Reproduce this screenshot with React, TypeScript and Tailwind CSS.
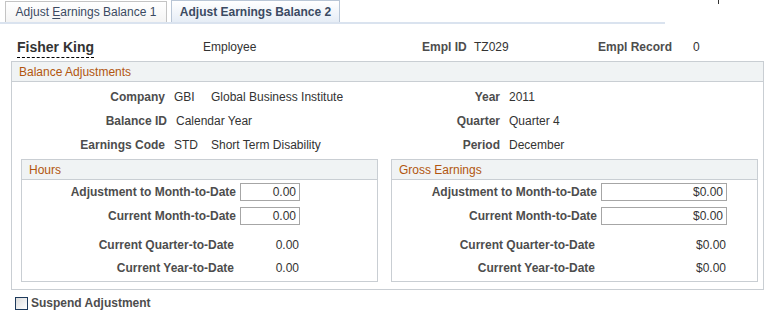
import React from "react";

const LBL = "font-bold text-[#4d4d4d]";
const VAL = "text-[#333333]";

function InputRow({ label, value, labelW, inputW }: { label: string; value: string; labelW: string; inputW: string }) {
  return (
    <div className="flex items-center h-[18px]">
      <div className={`${labelW} text-right ${LBL} whitespace-nowrap`}>{label}</div>
      <div className={`ml-[4px] ${inputW} h-[18px] border border-[#a6a6a6] bg-white text-right pr-[3px] leading-[16px] ${VAL}`}>{value}</div>
    </div>
  );
}

function TextRow({ label, value, labelW, valW }: { label: string; value: string; labelW: string; valW: string }) {
  return (
    <div className="flex items-center h-[23px]">
      <div className={`${labelW} text-right pr-[2px] ${LBL} whitespace-nowrap`}>{label}</div>
      <div className={`ml-[4px] ${valW} text-right pr-[1px] ${VAL}`}>{value}</div>
    </div>
  );
}

function SubBox({ title, width, children }: { title: string; width: string; children: React.ReactNode }) {
  return (
    <div className={`${width} border border-[#c9ced3]`}>
      <div className="h-[20px] bg-[#f0f3f4] border-b border-[#c9ced3] pl-[7px] text-[#b2560f] leading-[20px]">{title}</div>
      <div className="pt-[3px] pb-[2px] flex flex-col">{children}</div>
    </div>
  );
}

export default function App() {
  return (
    <div className="w-[770px] h-[316px] bg-white text-[12px] leading-[14px] relative overflow-hidden" style={{ fontFamily: '"Liberation Sans", Arial, sans-serif' }}>
      {/* tiny mark top right */}
      <div className="absolute left-[718px] top-0 w-[1px] h-[4px] bg-[#333]" />
      {/* Tabs */}
      <div className="w-[665px] h-[24px] border-b-2 border-[#dae3ef] flex items-end pl-[5px] gap-[4px]">
        <div className="w-[162px] h-[21px] border border-b-0 border-[#c4c4c4] bg-gradient-to-b from-white to-[#f4f4f4] text-[#3b4a62] flex items-center justify-center">
          <span>Adjust <span className="underline underline-offset-2">E</span>arnings Balance 1</span>
        </div>
        <div className="w-[169px] h-[22px] border border-b-0 border-[#b9c6d6] bg-gradient-to-b from-white to-[#e6edf6] text-[#3b4a62] font-bold flex items-center justify-center">
          Adjust Earnings Balance 2
        </div>
      </div>

      {/* Employee header */}
      <div className="flex items-center h-[18px] mt-[14px]">
        <div className="w-[203px] pl-[17px]">
          <span className="text-[14px] font-bold text-[#333] border-b border-dashed border-black pb-[2px]">Fisher King</span>
        </div>
        <div className={`w-[219px] ${VAL}`}>Employee</div>
        <div className={`${LBL} w-[52px]`}>Empl ID</div>
        <div className={`${VAL} w-[124px]`}>TZ029</div>
        <div className={`${LBL} w-[95px]`}>Empl Record</div>
        <div className={VAL}>0</div>
      </div>

      {/* Balance Adjustments */}
      <div className="ml-[11px] mt-[5px] w-[753px] border border-[#c9ced3]">
        <div className="h-[20px] bg-[#f0f3f4] border-b border-[#c9ced3] pl-[7px] text-[#b2560f] leading-[20px]">Balance Adjustments</div>
        <div className="pt-[3px] flex">
          <div className="w-[400px] flex flex-col">
            <div className="flex items-center h-[24px]">
              <div className={`w-[153px] text-right ${LBL}`}>Company</div>
              <div className={`ml-[9px] w-[37px] ${VAL}`}>GBI</div>
              <div className={VAL}>Global Business Institute</div>
            </div>
            <div className="flex items-center h-[24px]">
              <div className={`w-[155px] text-right ${LBL}`}>Balance ID</div>
              <div className={`ml-[9px] ${VAL}`}>Calendar Year</div>
            </div>
            <div className="flex items-center h-[24px]">
              <div className={`w-[153px] text-right ${LBL}`}>Earnings Code</div>
              <div className={`ml-[9px] w-[37px] ${VAL}`}>STD</div>
              <div className={VAL}>Short Term Disability</div>
            </div>
          </div>
          <div className="flex flex-col">
            <div className="flex items-center h-[24px]">
              <div className={`w-[88px] text-right ${LBL}`}>Year</div>
              <div className={`ml-[9px] ${VAL}`}>2011</div>
            </div>
            <div className="flex items-center h-[24px]">
              <div className={`w-[88px] text-right ${LBL}`}>Quarter</div>
              <div className={`ml-[9px] ${VAL}`}>Quarter 4</div>
            </div>
            <div className="flex items-center h-[24px]">
              <div className={`w-[88px] text-right ${LBL}`}>Period</div>
              <div className={`ml-[9px] ${VAL}`}>December</div>
            </div>
          </div>
        </div>

        <div className="flex mt-[2px] ml-[9px] gap-[13px] pb-[7px]">
          <SubBox title="Hours" width="w-[357px]">
            <div className="flex flex-col gap-[6px]">
              <InputRow label="Adjustment to Month-to-Date" value="0.00" labelW="w-[214px]" inputW="w-[60px]" />
              <InputRow label="Current Month-to-Date" value="0.00" labelW="w-[214px]" inputW="w-[60px]" />
            </div>
            <div className="mt-[8px] flex flex-col">
              <TextRow label="Current Quarter-to-Date" value="0.00" labelW="w-[214px]" valW="w-[60px]" />
              <TextRow label="Current Year-to-Date" value="0.00" labelW="w-[214px]" valW="w-[60px]" />
            </div>
          </SubBox>
          <SubBox title="Gross Earnings" width="w-[367px]">
            <div className="flex flex-col gap-[6px]">
              <InputRow label="Adjustment to Month-to-Date" value="$0.00" labelW="w-[205px]" inputW="w-[126px]" />
              <InputRow label="Current Month-to-Date" value="$0.00" labelW="w-[205px]" inputW="w-[126px]" />
            </div>
            <div className="mt-[8px] flex flex-col">
              <TextRow label="Current Quarter-to-Date" value="$0.00" labelW="w-[205px]" valW="w-[126px]" />
              <TextRow label="Current Year-to-Date" value="$0.00" labelW="w-[205px]" valW="w-[126px]" />
            </div>
          </SubBox>
        </div>
      </div>

      {/* Suspend Adjustment */}
      <div className="flex items-center mt-[6px] ml-[15px]">
        <div className="w-[13px] h-[13px] border border-[#1e3a5c] bg-gradient-to-br from-[#dcdcdc] to-white" />
        <div className={`ml-[3px] ${LBL}`}>Suspend Adjustment</div>
      </div>
    </div>
  );
}
